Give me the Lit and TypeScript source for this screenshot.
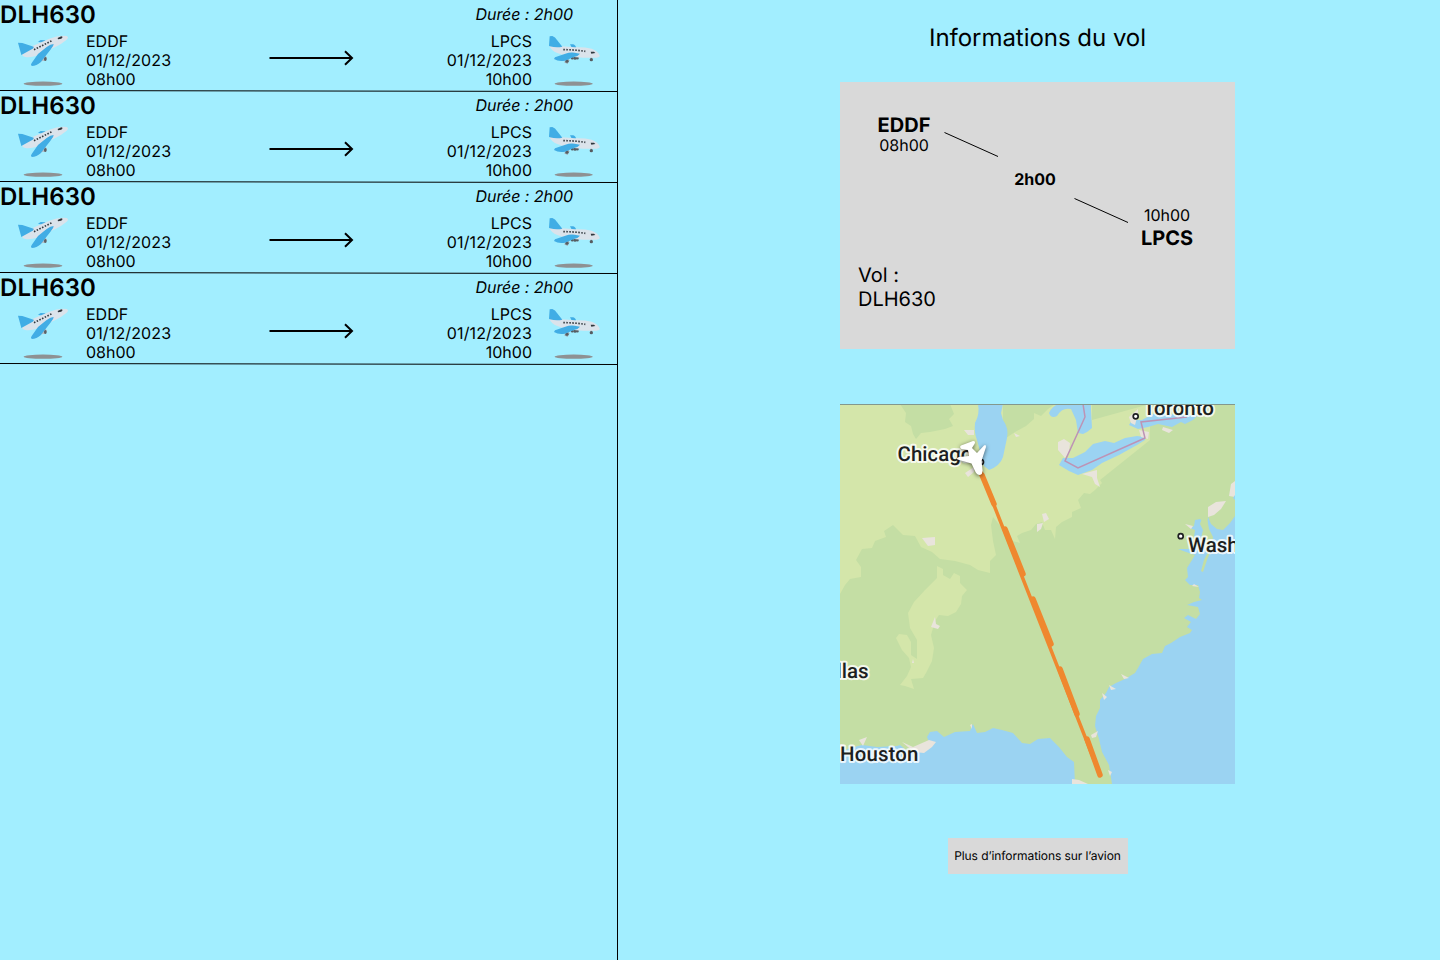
import { LitElement, html, css, svg } from "lit";
import { customElement, property, state } from "lit/decorators.js";

interface Flight {
  code: string;
  from: string;
  to: string;
  fromTime: string;
  toTime: string;
  date: string;
  duration: string;
}

const takeoff = html`<svg width="70" height="60" viewBox="0 0 210 180">
  <ellipse cx="99" cy="161" rx="58" ry="6.500" fill="#8e9193" />
  <path d="M84 35l8-5 15 1-8 8z" fill="#41ade5" />
  <path d="M92 84l14-8 5 8-4 9-8-1-8 3z" fill="#b4bdc3" />
  <ellipse cx="106" cy="87" rx="4" ry="6" fill="#5b6065" />
  <path d="M36 70l32-22 50-22q28-11 52-8q8 4 0 11q-14 12-34 22l-52 25q-24 8-38 5q-11-2-10-11z" fill="#dbe3eb" />
  <path d="M24 38l13 1 34 11q2 2-3 6l-34 19z" fill="#41ade5" />
  <path d="M110 51q12-9 21-9q0 6-8 15l-31 40q-12 11-27 11q-4-4 0-9l19-27z" fill="#41ade5" />
  <path d="M72 59l54-27" stroke="#30373d" stroke-width="5" stroke-dasharray="4.500 4.500" fill="none" />
  <path d="M143 24l11-5 4 2-4 5-10 2z" fill="#30373d" />
</svg>`;

const landing = html`<svg width="70" height="60" viewBox="0 0 210 180">
  <ellipse cx="101" cy="161" rx="57" ry="6.500" fill="#8e9193" />
  <path d="M90 43l10 0q9 4 8 12l-12-1z" fill="#41ade5" />
  <path d="M82 87l4 4-4 8-6-2 1-8zM153 80l2 8" stroke="#9aa3a9" stroke-width="4" fill="#9aa3a9" />
  <g fill="#565c61"><circle cx="81" cy="94" r="4.500" /><circle cx="97" cy="84" r="4.500" /><circle cx="105" cy="85" r="4.500" /><circle cx="112" cy="84" r="4.500" /><circle cx="154" cy="89" r="5" /></g>
  <path d="M28 47q5 14 24 22q34 13 78 14l40 0q11-1 9-7q-6-14-24-20q-22-5-50-4l-40-3z" fill="#dbe3eb" />
  <path d="M27 47l2-28 8-1q9 3 14 12l16 20q-16 4-38-1z" fill="#41ade5" />
  <path d="M76 71q14-5 28-3l16 3q-6 8-18 10l-27 11q-19 4-33-5l3-5z" fill="#41ade5" />
  <path d="M70 59q33 0 66 5" stroke="#30373d" stroke-width="5" stroke-dasharray="4.500 4.500" fill="none" />
  <path d="M152 65l10 0 4 4-12 2z" fill="#30373d" />
</svg>`;

@customElement("flight-row")
export class FlightRow extends LitElement {
  @property({ attribute: false }) flight!: Flight;

  static styles = css`
    :host { display: block; height: 91px; }
    svg { display: block; overflow: visible; }
    .head { display: flex; justify-content: space-between; height: 30px; padding-right: 44px; }
    .code { margin: 0; font-size: 24px; line-height: 29px; font-weight: 600; letter-spacing: .12px; }
    .duration { margin-top: 5px; font-size: 16px; line-height: 19px; font-style: italic; letter-spacing: -.06px; }
    .body { display: grid; grid-template-columns: 76px 183px 86px 177px 8px 70px; padding-left: 10px; height: 60px; }
    .info { padding-top: 2px; font-size: 16px; line-height: 19px; }
    .date { letter-spacing: .13px; }
    .info.end { text-align: right; }
    .arrow { margin-top: 20px; }
  `;

  render() {
    const f = this.flight;
    return html`
      <div class="head">
        <h2 class="code">${f.code}</h2>
        <span class="duration">Durée : ${f.duration}</span>
      </div>
      <div class="body">
        ${takeoff}
        <div class="info"><div>${f.from}</div><div class="date">${f.date}</div><div>${f.fromTime}</div></div>
        <svg class="arrow" width="86" height="16" viewBox="0 0 86 16">
          <path d="M0.500 8H83M76 1.200L83 8l-7 6.800" fill="none" stroke="#000" stroke-width="2" />
        </svg>
        <div class="info end"><div>${f.to}</div><div class="date">${f.date}</div><div>${f.toTime}</div></div>
        <span></span>
        ${landing}
      </div>
      <svg width="617" height="1" viewBox="0 0 617 1">
        <path d="M0 .5L617 1.500" stroke="#000" />
      </svg>
    `;
  }
}

@customElement("flight-map")
export class FlightMap extends LitElement {
  static styles = css`
    :host { display: block; width: 395px; height: 380px; }
    svg { display: block; }
    .city { font: 500 20.500px Roboto, Inter, sans-serif; fill: #1d1f21; stroke: #fff; stroke-opacity: .8; stroke-width: 4px; stroke-linejoin: round; paint-order: stroke; }
    .water { fill: #9bd3f2; }
    .plain { fill: #d4e6aa; }
    .forest { fill: #c4dea4; }
    .urban { fill: #e9e4dc; }
    .plane { fill: #fff; filter: drop-shadow(0 1px 2px #0009); }
  `;

  private land() {
    return svg`
      <rect class="forest" x="840" y="404" width="395" height="380" />
      <path class="plain" d="M840 404H1092V420L1150 404V440L1100 480L1102 483L1095 490L1090 494L1084 493L1078 500L1081 508L1072 512V517L1062 522L1056 527L1055 539L1051 530L1045 530L1042 522L1036 524L1031 530L1022 533L1017 536L1020 543L1013 541L1010 536L1003 529L993 517L991 525L993 541L996 555L990 561V573L978 570L970 565L955 561L940 559L932 552L921 547L915 536L903 535L893 525L884 531L886 537L875 541L872 548L862 549L856 560L861 567V577L850 579L845 585L840 594Z" />
      <path class="forest" d="M900 404L906 413L905 422L911 426L913 434L916 439L921 433L930 432L945 429L953 426L949 419L954 414L950 404Z" />
      <path class="forest" d="M1003 404L1003 440L1015 432L1026 426L1034 419L1034 413L1041 416L1048 409L1055 404Z" />
      <path class="plain" d="M937 566L943 569V575L950 579L954 573L960 576V583L967 590L962 596L961 604L956 612L948 616L939 615L935 621L931 635L934 648L932 661L926 673L923 678L911 679L914 689L905 686L900 685L907 676L911 667L909 658L902 650L896 638L899 634L907 635L911 642V655L917 659L917 640L910 628L908 613L914 602L925 590L937 578Z" />
    `;
  }

  private waters() {
    return svg`
      <g class="water">
        <path d="M978 404Q980 414 975 423Q974 433 977 440L980 451L984 466L989 470Q1000 466 1003 457L1007 438Q1009 428 1003 420L1001 413L1003 404Z" />
        <path d="M1049 413Q1052 406 1059 404H1091V410L1092 428L1087 432L1083 434L1078 433L1076 420L1071 409Q1062 407 1057 416Q1051 419 1049 413Z" />
        <path d="M1059 465L1063 458L1073 458L1085 452L1093 444L1105 441L1114 443L1125 438L1137 436L1145 437L1145 440L1137 445L1119 455L1102 463L1092 470L1078 475L1069 471Z" />
        <path d="M1129 425L1132 420L1142 420L1153 414L1198 415L1193 420L1185 424L1181 422L1172 427L1158 424L1148 427L1138 429Z" />
        <path d="M1235 516L1230 523L1223 530L1217 529L1211 524L1208 517L1207 524L1200 519L1195 520L1194 526L1190 528L1195 530L1194 537L1200 540L1196 547L1190 549L1178 549L1186 552L1195 555L1192 560L1187 568L1188 577L1185 580L1190 585L1198 585L1200 592L1199 598L1202 600L1194 602L1187 605L1198 607L1200 614L1196 619L1188 615L1184 618L1191 622L1187 627L1192 630L1190 633L1180 637L1171 643L1165 646L1162 653L1152 654L1143 659L1138 668L1135 673L1125 679L1116 683L1109 687L1106 693L1100 700L1100 708L1096 716L1095 726L1099 739L1102 752L1109 765L1112 784H1235Z" />
        <path d="M840 753L850 748L862 745L877 747L897 746L900 745L906 750L920 752L930 744L927 737L930 732L937 731L944 737L955 732L970 731L973 724L977 733L985 732L993 728L1002 730L1013 733L1022 743L1030 744L1038 739L1050 738L1059 747L1067 757L1074 762L1075 784H840Z" />
      </g>
      <path class="forest" d="M1202 518L1207 518L1209 529L1213 537L1211 550L1207 560L1203 572L1201 571L1204 560L1208 552L1205 549L1201 538L1203 530L1200 524Z" />
    `;
  }

  private towns() {
    return svg`
      <g class="urban">
        <path d="M1058 442L1064 439L1070 443L1069 453L1065 458L1058 450ZM1082 474L1097 470V478L1100 487L1095 484L1092 477ZM1139 430L1149 432L1148 439L1141 437ZM1163 427L1173 430L1169 433L1162 430ZM1129 417L1138 409V414L1135 425L1131 423Z" />
        <path d="M1208 507L1216 502L1226 501L1221 509L1214 515L1208 517ZM1231 484L1235 481V497L1229 496ZM1185 524L1193 526L1191 529ZM1192 586L1199 587L1194 584Z" />
        <path d="M964 430L974 430L974 435L968 435ZM965 473L974 467V472L968 477ZM1014 433L1020 436L1016 437ZM1042 514L1046 513L1049 519L1044 522ZM1037 524L1043 523L1041 529L1037 532Z" />
        <path d="M922 538L935 537V545L928 546ZM935 617L936 624L940 626L938 629L931 627ZM913 659L914 663L912 663ZM1121 674L1129 678L1124 679ZM1109 685L1116 689L1111 690ZM1102 693L1107 697L1104 700ZM1091 735L1098 731L1096 737L1092 738Z" />
        <path d="M859 740L867 737L863 746ZM902 742L913 747L929 740L936 742L932 747L924 753L914 752ZM970 725L972 724L972 729ZM1072 779L1079 780L1088 784H1072ZM1108 770L1112 772L1110 776ZM840 744L846 745L841 749Z" />
      </g>
      <path class="water" d="M1233 498L1235 495V500Z" />
      <path d="M1083 404L1085 417L1065 461L1078 468L1145 438L1141 422L1187 417" fill="none" stroke="#bd93b5" stroke-width="1.500" />
    `;
  }

  render() {
    return html`<svg width="395" height="380" viewBox="840 404 395 380">
      ${this.land()} ${this.waters()} ${this.towns()}
      <g fill="#fff" stroke="#1d1f21" stroke-width="1.700">
        <circle cx="1135.700" cy="416.300" r="2.500" />
        <circle cx="1180.700" cy="536.200" r="2.500" />
        <circle cx="981" cy="462" r="2.500" />
      </g>
      <text class="city" x="897.500" y="461" textLength="75">Chicago</text>
      <text class="city" x="1143" y="415" textLength="71">Toronto</text>
      <text class="city" x="1188" y="551.500">Washington</text>
      <text class="city" x="868.500" y="678" text-anchor="end">Dallas</text>
      <text class="city" x="840" y="761" textLength="78.500">Houston</text>
      <g fill="none" stroke="#ef882f" stroke-linecap="round">
        <path d="M981 472L1100 775" stroke-width="3.500" />
        <path d="M982 475L994 504M1005 529L1023 574M1033 599L1051 644M1060 669L1077 714M1087 739L1100 775" stroke-width="5.500" />
      </g>
      <path class="plane" d="M961 445.500L973 441Q976 441 974.500 444L972 448L977 453L984 445.500Q986 444 986 447L981.500 461L982.500 470Q983 474 980 475Q977 475 975.500 472L971.500 463.500L957.500 459.500Q956 458 959 457L969 456L968 450L961.500 449Q959 447 961 445.500Z" />
      <path d="M840 404.500H1235" stroke="#83988d" />
    </svg>`;
  }
}

@customElement("app-root")
export class AppRoot extends LitElement {
  @state() private flights: Flight[] = Array.from({ length: 4 }, () => ({
    code: "DLH630", from: "EDDF", to: "LPCS", fromTime: "08h00", toTime: "10h00", date: "01/12/2023", duration: "2h00",
  }));

  static styles = css`
    :host { display: grid; grid-template-columns: 618px 1fr; height: 960px; background: #a2eeff; color: #000; font-family: Inter, sans-serif; text-rendering: geometricPrecision; overflow: hidden; }
    svg { display: block; overflow: visible; }
    .list { border-right: 1px solid #000; }
    .details { display: flex; flex-direction: column; align-items: center; padding-right: 5px; padding-left: 22px; }
    .title { margin: 23px 0 0; font-size: 24px; line-height: 29px; font-weight: 400; letter-spacing: -.03px; }
    .card { box-sizing: border-box; width: 395px; height: 267px; margin-top: 30px; padding: 31px 14px 0 18px; background: #d9d9d9; }
    .trip { display: grid; grid-template-columns: 56px 66px 72px 69px 56px; padding-left: 18px; height: 150px; text-align: center; }
    .stop { font-size: 16px; line-height: 19px; }
    .stop strong { display: block; font-size: 20px; line-height: 24px; font-weight: 700; }
    .stop.start strong { line-height: 25px; margin-bottom: -2px; }
    .stop.arrival { margin-top: 93px; }
    .stop.arrival strong { line-height: 26px; }
    .leg { margin: 19px 0 0 12px; }
    .leg.second { margin: 84.500px 0 0 4px; }
    .time { margin: 57px 0 0 2px; font-size: 16px; line-height: 19px; font-weight: 700; }
    .number { font-size: 20px; line-height: 24px; }
    .map { margin-top: 55px; }
    .more { width: 180px; height: 36px; margin-top: 54px; padding: 0 0 2px; border: 0; background: #d9d9d9; color: #000; font: 12px Inter, sans-serif; letter-spacing: -.08px; text-rendering: geometricPrecision; white-space: nowrap; }
  `;

  render() {
    const f = this.flights[0];
    return html`
      <section class="list">${this.flights.map((item) => html`<flight-row .flight=${item}></flight-row>`)}</section>
      <section class="details">
        <h1 class="title">Informations du vol</h1>
        <div class="card">
          <div class="trip">
            <div class="stop start"><strong>${f.from}</strong>${f.fromTime}</div>
            <svg class="leg" width="54" height="25" viewBox="0 0 54 25"><path d="M.5 .5L54 24.500" stroke="#000" /></svg>
            <div class="time">${f.duration}</div>
            <svg class="leg second" width="54" height="25" viewBox="0 0 54 25"><path d="M.5 .5L54 24.500" stroke="#000" /></svg>
            <div class="stop arrival">${f.toTime}<strong>${f.to}</strong></div>
          </div>
          <div class="number">Vol :<br />${f.code}</div>
        </div>
        <flight-map class="map"></flight-map>
        <button class="more">Plus d’informations sur l’avion</button>
      </section>
    `;
  }
}
